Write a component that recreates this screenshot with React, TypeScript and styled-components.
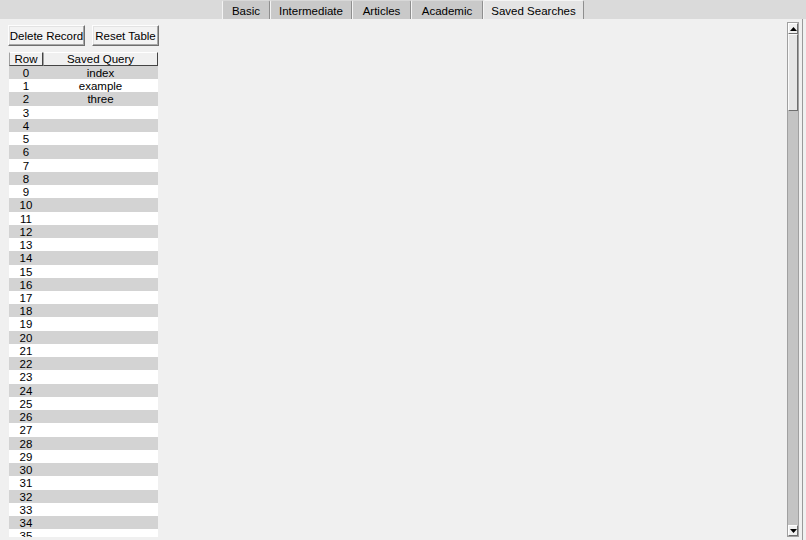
import { createGlobalStyle, styled } from 'styled-components';

const TABS = [
  { label: 'Basic', width: 48 },
  { label: 'Intermediate', width: 82 },
  { label: 'Articles', width: 59 },
  { label: 'Academic', width: 72 },
  { label: 'Saved Searches', width: 101 },
];
const SAVED: Record<number, string> = { 0: 'index', 1: 'example', 2: 'three' };
const ROW_COUNT = 36;

const GlobalStyle = createGlobalStyle`
  html, body {
    margin: 0;
    padding: 0;
    width: 806px;
    height: 540px;
    overflow: hidden;
    background: #f0f0f0;
    font-family: "Liberation Sans", Arial, sans-serif;
    font-size: 11px;
    color: #000;
  }
`;

const App = () => {
  return (
    <Page>
      <GlobalStyle />
      <TabBar>
        {TABS.map(tab => (
          <Tab key={tab.label} $width={tab.width} $active={tab.label === 'Saved Searches'}>
            {tab.label}
          </Tab>
        ))}
      </TabBar>
      <Body>
        <LeftPanel>
          <ButtonRow>
            <Button $width={77}>Delete Record</Button>
            <Button $width={67}>Reset Table</Button>
          </ButtonRow>
          <Table>
            <HeaderRow>
              <HeadCell $width={34}>Row</HeadCell>
              <HeadCell $width={115}>Saved Query</HeadCell>
            </HeaderRow>
            {Array.from({ length: ROW_COUNT }, (_, i) => (
              <Row key={i} $odd={i % 2 === 1}>
                <Cell $width={34}>{i}</Cell>
                <Cell $width={115}>{SAVED[i] ?? ''}</Cell>
              </Row>
            ))}
          </Table>
        </LeftPanel>
        <Spacer />
        <Scrollbar>
          <ArrowButton>
            <svg width="7" height="4" viewBox="0 0 7 4">
              <polygon points="0,4 3.5,0 7,4" fill="#000" />
            </svg>
          </ArrowButton>
          <Thumb />
          <Trough />
          <ArrowButton>
            <svg width="7" height="4" viewBox="0 0 7 4">
              <polygon points="0,0 3.5,4 7,0" fill="#000" />
            </svg>
          </ArrowButton>
        </Scrollbar>
        <EdgeLine />
      </Body>
    </Page>
  );
};

const Page = styled.div`
  display: flex;
  flex-direction: column;
  width: 806px;
  height: 540px;
  background: #f0f0f0;
`;
const TabBar = styled.div`
  display: flex;
  justify-content: center;
  align-items: flex-end;
  height: 19px;
  background: #dadada;
  flex-shrink: 0;
`;
const Tab = styled.div<{ $active: boolean; $width: number }>`
  display: flex;
  align-items: center;
  justify-content: center;
  width: ${p => p.$width}px;
  height: 19px;
  box-sizing: border-box;
  background: ${p => (p.$active ? '#e4e4e4' : '#c9c9c9')};
  border-left: 1px solid #f4f4f4;
  border-right: 1px solid #8e8e8e;
  border-top: 1px solid ${p => (p.$active ? '#f4f4f4' : '#d8d8d8')};
  border-radius: 2px 2px 0 0;
  white-space: nowrap;
  font-size: 11.5px;
  padding-top: 1px;
`;
const Body = styled.div`
  display: flex;
  flex: 1;
  min-height: 0;
`;
const LeftPanel = styled.div`
  display: flex;
  flex-direction: column;
  padding: 6px 0 0 8px;
  overflow: hidden;
`;
const ButtonRow = styled.div`
  display: flex;
  gap: 7px;
`;
const Button = styled.div<{ $width: number }>`
  display: flex;
  align-items: center;
  justify-content: center;
  width: ${p => p.$width}px;
  height: 21px;
  box-sizing: border-box;
  background: #f3f3f3;
  border: 1px solid;
  border-color: #fdfdfd #6f6f6f #6f6f6f #fdfdfd;
  box-shadow: inset -1px -1px 0 #a8a8a8, inset 1px 1px 0 #e3e3e3;
  white-space: nowrap;
  font-size: 11.5px;
`;
const Table = styled.div`
  display: flex;
  flex-direction: column;
  margin: 6px 0 0 1px;
  width: 149px;
  height: 485px;
  overflow: hidden;
`;
const HeaderRow = styled.div`
  display: flex;
  height: 14px;
  flex-shrink: 0;
`;
const HeadCell = styled.div<{ $width: number }>`
  width: ${p => p.$width}px;
  box-sizing: border-box;
  text-align: center;
  line-height: 12px;
  white-space: nowrap;
  background: #f0f0f0;
  border: 1px solid;
  border-color: #ffffff #444 #444 #a0a0a0;
  font-size: 11.5px;
`;
const Row = styled.div<{ $odd: boolean }>`
  display: flex;
  height: 13.24px;
  flex-shrink: 0;
  background: ${p => (p.$odd ? '#ffffff' : '#d3d3d3')};
`;
const Cell = styled.div<{ $width: number }>`
  width: ${p => p.$width}px;
  text-align: center;
  line-height: 13px;
  padding-top: 1px;
  white-space: nowrap;
  font-size: 11.5px;
`;
const Spacer = styled.div`
  flex: 1;
`;
const Scrollbar = styled.div`
  display: flex;
  flex-direction: column;
  width: 12px;
  margin: 3px 3px 3px 0;
  background: #c4c4c4;
  border: 1px solid #a0a0a0;
  box-sizing: border-box;
`;
const ArrowButton = styled.div`
  display: flex;
  align-items: center;
  justify-content: center;
  height: 11px;
  flex-shrink: 0;
  background: #f0f0f0;
  border: 1px solid;
  border-color: #fff #6f6f6f #6f6f6f #fff;
  box-sizing: border-box;
`;
const Thumb = styled.div`
  height: 77px;
  flex-shrink: 0;
  background: #e6e6e6;
  border: 1px solid;
  border-color: #fafafa #6f6f6f #6f6f6f #fafafa;
  box-sizing: border-box;
`;
const Trough = styled.div`
  flex: 1;
`;
const EdgeLine = styled.div`
  width: 1px;
  margin-right: 3px;
  background: #9a9a9a;
`;

export default App;
